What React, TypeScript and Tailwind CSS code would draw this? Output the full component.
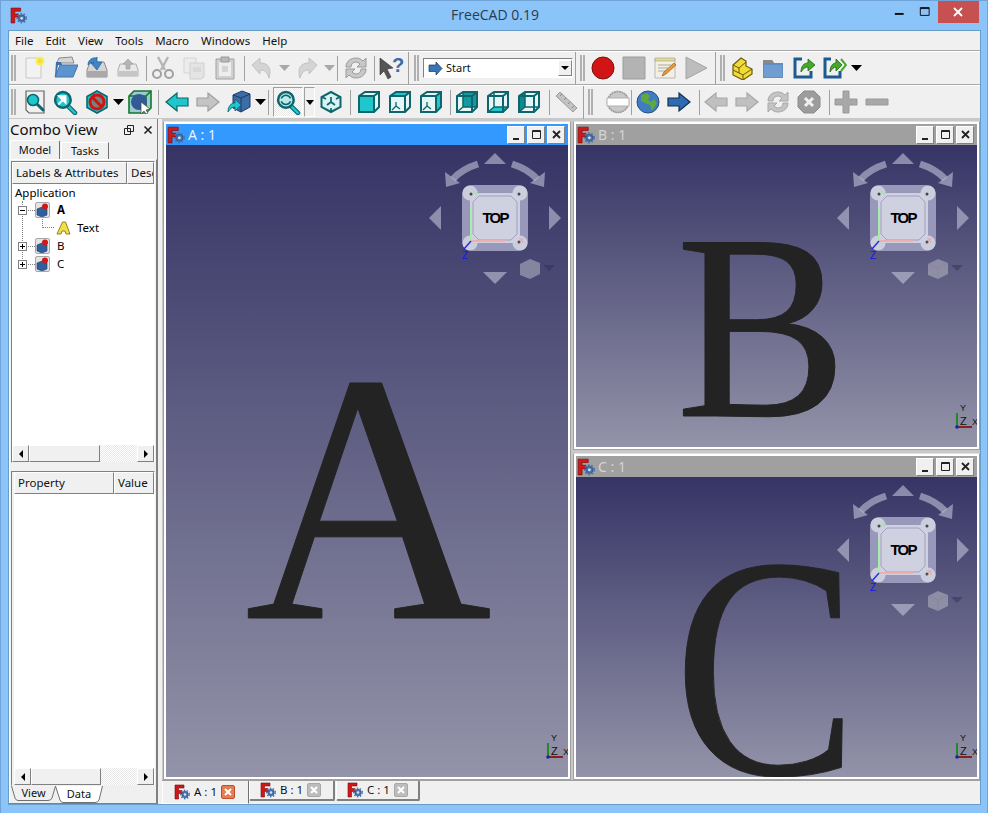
import type { ReactNode } from "react";

const bevel = "border border-t-white border-l-white border-b-[#808080] border-r-[#808080]";
const dither = "bg-[repeating-conic-gradient(#ffffff_0_25%,#e8e8e8_0_50%)] bg-[length:2px_2px]";

// ---------- icons ----------
function Ico({ children, size = 24 }: { children: ReactNode; size?: number }) {
  return (
    <svg width={size} height={size} viewBox="0 0 24 24">
      {children}
    </svg>
  );
}

function FcLogo({ size = 16 }: { size?: number }) {
  return (
    <svg width={size} height={size} viewBox="0 0 16 16" className="shrink-0">
      <path d="M1 1h9v3H4.500v2.500H8v3H4.500V15H1z" fill="#d01818" stroke="#7a0c0c" strokeWidth="0.6" />
      <circle cx="11" cy="10.500" r="3.200" fill="#4a74b0" stroke="#24456f" strokeWidth="0.6" />
      <circle cx="11" cy="10.500" r="4.200" fill="none" stroke="#4a74b0" strokeWidth="1.600" strokeDasharray="1.500 1.500" />
      <circle cx="11" cy="10.500" r="1.200" fill="#dfe6f0" />
    </svg>
  );
}

const teal = "#1fc6cc";
const tealDark = "#0c666c";

type Face = "iso" | "front" | "top" | "right" | "rear" | "left" | "bottom";

function Cube({ face }: { face: Face }) {
  if (face === "iso") {
    return (
      <Ico>
        <path d="M12 2l9.500 5v10L12 22l-9.500-5V7z" fill="#d9f2f2" stroke={tealDark} strokeWidth="2" />
        <path d="M3 7l4 2M21 7l-4 2M12 22v-4M12 12V7M12 12l-4 3M12 12l4 3" stroke={tealDark} strokeWidth="1.700" />
      </Ico>
    );
  }
  const wire = face === "rear" || face === "left" || face === "bottom";
  return (
    <Ico>
      <path d="M2 6l6-4h14v15l-5 5H2z" fill="#e6f6f6" />
      {face === "rear" && <path d="M8 2h14v15H8z" fill="#119aa1" />}
      {face === "left" && <path d="M2 6l6-4v15l-6 5z" fill="#0d8a90" />}
      {face === "bottom" && <path d="M8 17h14l-5 5H2z" fill={teal} />}
      {wire && <path d="M8 2v15h14M8 17l-6 5" fill="none" stroke={tealDark} strokeWidth="1.500" />}
      {!wire && <path d="M8 16l-4 4M8 16l4 3M8 16v-4" stroke={tealDark} strokeWidth="1.300" />}
      {face === "top" && <path d="M2 6l6-4h14l-5 4z" fill={teal} />}
      {face === "right" && <path d="M17 6l5-4v15l-5 5z" fill={teal} />}
      {face === "front" && <path d="M2 6h15v16H2z" fill={teal} />}
      <path d="M2 6l6-4h14v15l-5 5H2zM2 6h15v16M17 6l5-4" fill="none" stroke={tealDark} strokeWidth="2" />
    </Ico>
  );
}

function Magnifier({ children, fill = "#bdeaea" }: { children?: ReactNode; fill?: string }) {
  return (
    <Ico size={25}>
      <path d="M14 15l7 7" stroke="#0a6a70" strokeWidth="4.500" strokeLinecap="round" />
      <path d="M14 15l7 7" stroke={teal} strokeWidth="2.200" strokeLinecap="round" />
      <circle cx="9.500" cy="9.500" r="7.500" fill={fill} stroke={tealDark} strokeWidth="2.400" />
      {children}
    </Ico>
  );
}

const grayFill = "#c8c8c8";
const grayLine = "#9a9a9a";

function Arrow({ dir, fill, line }: { dir: "l" | "r"; fill: string; line: string }) {
  return (
    <Ico>
      <path
        d={dir === "l" ? "M1 12L12 3v5h11v8H12v5z" : "M23 12L12 3v5H1v8h11v5z"}
        fill={fill}
        stroke={line}
        strokeWidth="1.200"
      />
    </Ico>
  );
}

function Refresh({ fill, line }: { fill: string; line: string }) {
  const half = "M2 11C2 5 7 2 12 2c3 0 5 1 7 3l3-3v9h-9l3-3c-1-1-3-2-4-2-3 0-5 2-5 5z";
  return (
    <Ico>
      <path d={half} fill={fill} stroke={line} />
      <path d={half} fill={fill} stroke={line} transform="rotate(180 12 12)" />
    </Ico>
  );
}

const icons: Record<string, ReactNode> = {
  new: (
    <Ico>
      <path d="M3 2h15v20H3z" fill="#f2f2f2" stroke="#c8c8c8" />
      <circle cx="17" cy="5" r="4.500" fill="#f5ee60" />
      <circle cx="17" cy="5" r="2.200" fill="#f6d93a" />
    </Ico>
  ),
  open: (
    <Ico>
      <path d="M3 6l2-4 13-1 2 6H3z" fill="#d6d6d6" stroke="#8a8a8a" />
      <path d="M6 9h18l-5 12H1z" fill="#5b94cf" stroke="#4273a8" />
      <path d="M2 6h5l1 3H4L2 20H1z" fill="#396ea6" />
    </Ico>
  ),
  save: (
    <Ico>
      <path d="M2 14l3-8h14l3 8v7H2z" fill="#d4d4d4" stroke="#8a8a8a" />
      <path d="M2 15h20v6H2z" fill="#a9a9a9" />
      <path d="M3 9c0-5 4-8 9-7v-1 5h5l-5 8-6-7h3c-2-1-4 0-6 2z" fill="#3f84c8" stroke="#2a5f96" strokeWidth="0.7" />
    </Ico>
  ),
  saveas: (
    <Ico>
      <path d="M2 14l2-6h16l2 6v6H2z" fill="#e8e8e8" stroke="#b0b0b0" />
      <path d="M2 15h20v5H2z" fill="#c6c6c6" />
      <path d="M12 3l5 5h-3v5h-4V8H7z" fill="#b5b5b5" stroke="#999" strokeWidth="0.6" />
    </Ico>
  ),
  cut: (
    <Ico>
      <path d="M7 1l7 13M17 1l-7 13" stroke="#b5b5b5" strokeWidth="2.400" />
      <circle cx="6" cy="18" r="4" fill="none" stroke="#a0a0a0" strokeWidth="2" />
      <circle cx="18" cy="18" r="4" fill="none" stroke="#a0a0a0" strokeWidth="2" />
    </Ico>
  ),
  copy: (
    <Ico>
      <path d="M2 2h12v15H2z" fill="#ececec" stroke="#d4d4d4" />
      <path d="M8 7h14v14l-3 2H8z" fill="#e4e4e4" stroke="#cfcfcf" />
      <path d="M11 11h8v5h-8z" fill="#d8d8d8" />
    </Ico>
  ),
  paste: (
    <Ico>
      <path d="M3 3h18v20H3z" fill="#d0d0d0" stroke="#a2a2a2" />
      <path d="M6 6h12v14H6z" fill="#ededed" />
      <path d="M8 1h8v5H8z" fill="#b9b9b9" stroke="#999" />
      <path d="M9 10h6v6H9z" fill="#d4d4d4" />
    </Ico>
  ),
  undo: (
    <Ico>
      <path d="M1 9l8-7v5c8 0 12 5 9 15-2-6-4-8-9-8v4z" fill="#d4d4d4" stroke="#c0c0c0" />
    </Ico>
  ),
  redo: (
    <Ico>
      <path d="M23 9l-8-7v5C7 7 3 12 6 22c2-6 4-8 9-8v4z" fill="#d4d4d4" stroke="#c0c0c0" />
    </Ico>
  ),
  refresh: <Refresh fill={grayFill} line={grayLine} />,
  what: (
    <svg width="26" height="26" viewBox="0 0 26 26">
      <path d="M2 3l13 10-6 1 4 8-3 2-4-8-4 4z" fill="#555" stroke="#333" strokeWidth="0.6" />
      <text x="14" y="17" fontSize="20" fontWeight="700" fontFamily="Liberation Sans" fill="#3a6ea8">
        ?
      </text>
    </svg>
  ),
  record: (
    <svg width="26" height="26" viewBox="0 0 26 26">
      <circle cx="13" cy="13" r="11" fill="#d11414" stroke="#7d1010" />
    </svg>
  ),
  stop: (
    <Ico>
      <path d="M1 1h22v22H1z" fill="#b3b3b3" stroke="#9c9c9c" />
    </Ico>
  ),
  macroEdit: (
    <Ico>
      <path d="M2 3h20v19H2z" fill="#f3f0e2" stroke="#b8b8b8" />
      <path d="M2 2h20v3H2z" fill="#e0d9a0" stroke="#a8a070" strokeWidth="0.6" />
      <path d="M5 9h13M5 12h10M5 15h8" stroke="#a8a8a8" />
      <path d="M9 20l2-4L21 7l2 2-10 9z" fill="#e99a3c" stroke="#9a5c1e" strokeWidth="0.7" />
    </Ico>
  ),
  play: (
    <Ico>
      <path d="M2 1l21 11L2 23z" fill="#bdbdbd" stroke="#a6a6a6" />
    </Ico>
  ),
  part: (
    <Ico>
      <path d="M3 9l8-7 5 3v5l6 3v5l-9 6-10-5z" fill="#f2da3a" stroke="#6a5c08" strokeWidth="1.200" />
      <path d="M3 9l6 3 7-6M9 12v5l4 2 9-6M3 14l6 3M13 19v4" fill="none" stroke="#6a5c08" strokeWidth="1" />
    </Ico>
  ),
  folder: (
    <Ico>
      <path d="M2 4h9l2 3h9v15H2z" fill="#5f8dc4" />
      <path d="M2 4h9l2 3H2z" fill="#8a8a8a" />
      <path d="M3 9h18v12H3z" fill="#6f9dd2" />
    </Ico>
  ),
  exportA: (
    <Ico>
      <path d="M10 3H3v18h16v-6" fill="none" stroke="#1e5a92" strokeWidth="3" />
      <path d="M9 16c0-6 3-9 7-9V3l7 6-7 6v-4c-3 0-5 2-7 5z" fill="#47a82c" stroke="#1d6a10" strokeWidth="0.8" />
    </Ico>
  ),
  exportB: (
    <Ico>
      <path d="M8 3H2v18h15v-6" fill="none" stroke="#1e5a92" strokeWidth="3" />
      <path d="M7 16c0-6 3-9 6-9V3l6 6-6 6v-4c-2 0-4 2-6 5z" fill="#47a82c" stroke="#1d6a10" strokeWidth="0.8" />
      <path d="M18 3l5 6-5 6" fill="none" stroke="#47a82c" strokeWidth="2" />
    </Ico>
  ),
  fitAll: (
    <Ico>
      <path d="M3 1h18v22H6l-3-3z" fill="#f0f0f0" stroke="#666" strokeWidth="1.200" />
      <path d="M14 14l6 6" stroke={tealDark} strokeWidth="3" strokeLinecap="round" />
      <circle cx="10" cy="10" r="5.500" fill={teal} stroke={tealDark} strokeWidth="1.600" />
    </Ico>
  ),
  fitSel: (
    <Magnifier fill={teal}>
      <path d="M5 14l6-6M6 6h6v6z" fill="#fff" stroke="#fff" strokeWidth="2" />
    </Magnifier>
  ),
  noDraw: (
    <Ico>
      <path d="M12 1l10 5.500v11L12 23 2 17.500v-11z" fill={teal} stroke={tealDark} strokeWidth="1.600" />
      <circle cx="12" cy="12" r="7" fill="#7f7f7f" stroke="#cf1212" strokeWidth="3" />
      <path d="M7 7l10 10" stroke="#cf1212" strokeWidth="3" />
    </Ico>
  ),
  selBox: (
    <Ico>
      <path d="M6 1h17v17l-5 5H1V6z" fill="#9ec9cf" stroke="#0d7a2c" strokeWidth="1.600" />
      <path d="M1 6h17v17M18 6l5-5" fill="none" stroke="#0d7a2c" strokeWidth="1.600" />
      <circle cx="11" cy="12" r="8" fill="#315a96" />
      <path d="M13 12l9 7-4 1 2 3-2 1-2-3-3 3z" fill="#fff" stroke="#444" strokeWidth="0.7" />
    </Ico>
  ),
  tealLeft: <Arrow dir="l" fill={teal} line={tealDark} />,
  grayRight: <Arrow dir="r" fill="#c4c4c4" line="#a0a0a0" />,
  boxAction: (
    <Ico>
      <path d="M6 5l9-4 8 3v13l-9 5-8-4z" fill="#3d6da8" stroke="#1c3c66" />
      <path d="M6 5l8 3 9-4M14 8v14" fill="none" stroke="#1c3c66" />
      <path d="M1 22c0-6 3-9 7-9V9l6 6-6 6v-4c-3 0-5 2-7 5z" fill={teal} stroke={tealDark} strokeWidth="0.8" />
    </Ico>
  ),
  zoomSync: (
    <Magnifier>
      <path d="M5 8c2-4 7-4 9 0M14 11c-2 4-7 4-9 0" fill="none" stroke={tealDark} strokeWidth="1.500" />
    </Magnifier>
  ),
  iso: <Cube face="iso" />,
  front: <Cube face="front" />,
  top: <Cube face="top" />,
  right: <Cube face="right" />,
  rear: <Cube face="rear" />,
  bottom: <Cube face="bottom" />,
  left: <Cube face="left" />,
  ruler: (
    <Ico>
      <path d="M2 6l4-4 17 16-4 4z" fill="#c2c2c2" stroke="#9c9c9c" />
      <path d="M8 4l-2 2M12 8l-2 2M16 12l-2 2M20 16l-2 2" stroke="#8a8a8a" />
    </Ico>
  ),
  ring: (
    <Ico>
      <circle cx="12" cy="12" r="10.500" fill="#c8c8c8" stroke="#9a9a9a" strokeWidth="1.600" strokeDasharray="2 0.500" />
      <path d="M1 8h22v8H1z" fill="#fff" stroke="#b0b0b0" />
    </Ico>
  ),
  globe: (
    <Ico>
      <circle cx="12" cy="12" r="11" fill="#3f7cc4" stroke="#2a4f80" />
      <path d="M5 5l6-2 3 3-2 4 3 2 3-3 3 4-5 8-2-6-5-2-4-2z" fill="#5fa83c" />
    </Ico>
  ),
  blueRight: <Arrow dir="r" fill="#2e6bb0" line="#172f52" />,
  grayLeft2: <Arrow dir="l" fill="#c0c0c0" line="#a8a8a8" />,
  grayRight2: <Arrow dir="r" fill="#c0c0c0" line="#a8a8a8" />,
  refresh2: <Refresh fill="#c4c4c4" line="#a8a8a8" />,
  stopX: (
    <Ico>
      <path d="M7 1h10l6 6v10l-6 6H7l-6-6V7z" fill="#9c9c9c" stroke="#8c8c8c" />
      <path d="M8 8l8 8M16 8l-8 8" stroke="#f0f0f0" strokeWidth="3" />
    </Ico>
  ),
  plus: (
    <Ico>
      <path d="M9 1h6v8h8v6h-8v8H9v-8H1V9h8z" fill="#a8a8a8" stroke="#9a9a9a" />
    </Ico>
  ),
  minus: (
    <Ico>
      <path d="M1 9h22v6H1z" fill="#a8a8a8" stroke="#9a9a9a" />
    </Ico>
  ),
};

// ---------- toolbar bits ----------
function Btn({ name }: { name: string }) {
  return <div className="flex h-[30px] w-[31px] shrink-0 items-center justify-center">{icons[name]}</div>;
}

function Drop({ color = "black", w = "w-[14px]" }: { color?: string; w?: string }) {
  return (
    <div className={`flex h-[30px] shrink-0 items-center justify-center ${w}`}>
      <svg width="11" height="6" viewBox="0 0 11 6">
        <path d="M0 0h11L5.500 6z" fill={color} />
      </svg>
    </div>
  );
}

function Sep({ className = "" }: { className?: string }) {
  return <div className={`h-[25px] w-px shrink-0 bg-[#a0a0a0] ${className}`} />;
}

function Grip({ className = "" }: { className?: string }) {
  return (
    <div className={`flex h-[26px] shrink-0 gap-px ${className}`}>
      <div className="w-[2px] border-x border-x-[#b0b0b0] bg-white" />
      <div className="w-[2px] border-x border-x-[#b0b0b0] bg-white" />
    </div>
  );
}

function WinBtn({ kind }: { kind: "min" | "max" | "close" }) {
  return (
    <div className={`flex h-[18px] w-[18px] items-center justify-center bg-[#f0f0f0] ${bevel}`}>
      <svg width="11" height="11" viewBox="0 0 11 11">
        {kind === "min" && <path d="M2 9h6v2H2z" fill="#222" />}
        {kind === "max" && <path d="M1.500 1.500h8v8h-8zM1.500 2.500h8" fill="none" stroke="#222" />}
        {kind === "close" && <path d="M2 2l7 7M9 2l-7 7" stroke="#222" strokeWidth="1.800" />}
      </svg>
    </div>
  );
}

// ---------- navigation cube overlay ----------
function NaviCube({ className }: { className: string }) {
  const soft = "rgba(205,205,225,0.55)";
  return (
    <svg width="140" height="145" viewBox="-70 -73 140 145" className={`absolute ${className}`}>
      <path d="M0-65l11 11h-22z" fill={soft} />
      <path d="M0 66l-12-12h24z" fill={soft} />
      <path d="M-66 0l12-12v24z" fill={soft} />
      <path d="M66 0l-12-12v24z" fill={soft} />
      <path d="M-17-54Q-33-49-42-39" fill="none" stroke={soft} strokeWidth="7" />
      <path d="M-49-31l-1-15 15 11z" fill={soft} />
      <path d="M17-54Q33-49 42-39" fill="none" stroke={soft} strokeWidth="7" />
      <path d="M49-31l1-15-15 11z" fill={soft} />
      <path d="M-22-33h44q11 0 11 11v44q0 11-11 11h-44q-11 0-11-11v-44q0-11 11-11z" fill="#9899ba" />
      <circle cx="-25" cy="-25" r="7.500" fill="#cdcedd" />
      <circle cx="25" cy="-25" r="7.500" fill="#cdcedd" />
      <circle cx="-25" cy="25" r="7.500" fill="#cdcedd" />
      <circle cx="25" cy="25" r="7.500" fill="#cdcedd" />
      <path d="M-25-20l5-5h40l5 5v40l-5 5h-40l-5-5z" fill="#cfd0e0" />
      <path d="M-22-16l6-6h32l6 6v32l-6 6h-32l-6-6z" fill="none" stroke="#a0a1bf" strokeWidth="1" />
      <circle cx="-24" cy="-24" r="1.500" fill="#444" />
      <circle cx="24" cy="-24" r="1.500" fill="#444" />
      <circle cx="24" cy="24" r="1.500" fill="#444" />
      <path d="M-24 23v-34" stroke="#a6f0a6" strokeWidth="1.800" />
      <path d="M-24 23h34" stroke="#f0afaf" strokeWidth="1.800" />
      <path d="M-24 23l-7 8" stroke="#2222ee" strokeWidth="1.400" />
      <text x="-33" y="41" fontSize="10" fontFamily="Liberation Sans" fill="#1515e8">Z</text>
      <text x="-22" y="-22" fontSize="8" fontFamily="Liberation Sans" fill="#8cf08c">Y</text>
      <text x="24" y="25" fontSize="8" fontFamily="Liberation Sans" fill="#e89a9a">X</text>
      <text x="0" y="5" textAnchor="middle" fontSize="15" fontWeight="700" letterSpacing="-1.800" fontFamily="Liberation Sans" fill="#000">TOP</text>
      <path d="M25 46l10-5 10 4v11l-10 5-10-4z" fill="rgba(175,175,190,0.6)" />
      <path d="M25 46l10 4 10-5M35 50v11" fill="none" stroke="rgba(130,130,155,0.6)" />
      <path d="M48 47h12l-6 6z" fill="rgba(40,40,70,0.4)" />
    </svg>
  );
}

function MiniAxis() {
  return (
    <svg width="26" height="36" viewBox="0 0 26 36" className="absolute bottom-[11px] right-[-1px]">
      <path d="M5 27V13" stroke="#1f8a2c" strokeWidth="2" />
      <path d="M5 27h15" stroke="#8a2020" strokeWidth="2" />
      <circle cx="5" cy="27" r="1.800" fill="#2020a0" />
      <text x="8" y="11" fontSize="9" fontFamily="Liberation Sans" fill="#111">Y</text>
      <text x="8" y="25" fontSize="11" fontFamily="Liberation Sans" fill="#111">Z</text>
      <text x="20" y="25" fontSize="9" fontFamily="Liberation Sans" fill="#111">X</text>
    </svg>
  );
}

// ---------- 3D view sub window ----------
function SubWindow({
  title,
  active,
  className,
  cube,
  letter,
}: {
  title: string;
  active?: boolean;
  className: string;
  cube: string;
  letter: ReactNode;
}) {
  return (
    <div className={`flex flex-col border border-b-[#a0a0a0] border-l-[#a0a0a0] border-r-[#a0a0a0] border-t-[#e0e0e0] bg-white p-[2px] ${className}`}>
      <div className={`flex h-[21px] shrink-0 items-center gap-[3px] pl-px pr-[3px] ${active ? "bg-[#3399ff]" : "bg-[#a0a0a0]"}`}>
        <FcLogo size={18} />
        <span className={`text-[14px] ${active ? "text-[#e8f2ff]" : "text-[#d4d4d4]"}`}>{title}</span>
        <div className="ml-auto flex gap-[2px]">
          <WinBtn kind="min" />
          <WinBtn kind="max" />
          <WinBtn kind="close" />
        </div>
      </div>
      <div className="relative flex-1 overflow-hidden bg-[linear-gradient(#363465,#9393a9)]">
        {letter}
        <NaviCube className={`top-0 ${cube}`} />
        <MiniAxis />
      </div>
    </div>
  );
}

function BigLetter({ children, className }: { children: string; className: string }) {
  return (
    <span className={`absolute origin-left leading-none text-[#232323] [-webkit-text-stroke:1px_#232323] [font-family:'Liberation_Serif',serif] ${className}`}>
      {children}
    </span>
  );
}

// ---------- left dock ----------
function HScroll({ thumb }: { thumb: string }) {
  return (
    <div className={`flex h-[17px] shrink-0 ${dither}`}>
      <div className={`flex w-[17px] items-center justify-center bg-[#f0f0f0] ${bevel}`}>
        <svg width="6" height="8" viewBox="0 0 6 8"><path d="M5 0v8L1 4z" /></svg>
      </div>
      <div className={`bg-[#f0f0f0] ${bevel} ${thumb}`} />
      <div className={`ml-auto flex w-[17px] items-center justify-center bg-[#f0f0f0] ${bevel}`}>
        <svg width="6" height="8" viewBox="0 0 6 8"><path d="M1 0v8l4-4z" /></svg>
      </div>
    </div>
  );
}

function HeadCell({ children, className }: { children: string; className: string }) {
  return (
    <div className={`flex h-[22px] items-center overflow-hidden whitespace-nowrap bg-[#f0f0f0] pl-[3px] ${bevel} ${className}`}>
      {children}
    </div>
  );
}

function Expander({ open }: { open?: boolean }) {
  return (
    <div className="relative h-[9px] w-[9px] shrink-0 border border-[#808080] bg-white">
      <div className="absolute left-[1px] top-[3px] h-px w-[5px] bg-black" />
      {!open && <div className="absolute left-[3px] top-[1px] h-[5px] w-px bg-black" />}
    </div>
  );
}

function DocIcon() {
  return (
    <div className="flex h-[16px] w-[15px] items-center justify-center rounded-[2px] border border-[#a8a8a8] bg-[#e4e4e4]">
      <svg width="13" height="14" viewBox="0 0 13 14">
        <path d="M1 6l5-2 5 2v6l-5 2-5-2z" fill="#2f5f9c" stroke="#1d3d66" strokeWidth="0.6" />
        <circle cx="9" cy="3.500" r="3" fill="#d01818" />
      </svg>
    </div>
  );
}

function TreeRow({ label, open, bold }: { label: string; open?: boolean; bold?: boolean }) {
  return (
    <div className="flex h-[18px] items-center pl-[6px]">
      <Expander open={open} />
      <div className="ml-[1px] h-0 w-[7px] border-t border-dotted border-[#808080]" />
      <DocIcon />
      <span className={`ml-[7px] text-black ${bold ? "font-bold" : ""}`}>{label}</span>
    </div>
  );
}

function Tab({ title, className }: { title: string; className: string }) {
  return (
    <div className={`flex h-[20px] items-center gap-[4px] rounded-b-[2px] border-b-2 border-l border-r-2 border-b-[#808080] border-l-white border-r-[#808080] pl-[10px] ${className}`}>
      <FcLogo size={16} />
      <span>{title}</span>
      <div className="flex h-[14px] w-[14px] items-center justify-center rounded-[2px] border border-[#a8a8a8] bg-[#bdbdbd]">
        <svg width="8" height="8" viewBox="0 0 8 8"><path d="M1 1l6 6M7 1l-6 6" stroke="#fff" strokeWidth="2" /></svg>
      </div>
    </div>
  );
}

export default function App() {
  return (
    <div className="flex h-[813px] w-[988px] flex-col overflow-hidden border border-b-0 border-[#6fa3d6] bg-[#8bc4f8] text-[11.5px] text-[#111] [font-family:'Noto_Sans','Liberation_Sans',sans-serif]">
      {/* title bar */}
      <div className="flex h-[29px] shrink-0 items-start">
        <div className="w-[100px] pl-[9px] pt-[6px]">
          <FcLogo size={17} />
        </div>
        <div className="flex-1 pl-[2px] pt-[3px] text-center text-[14px] text-[#2b3a4d] [font-family:'Open_Sans',sans-serif]">FreeCAD 0.19</div>
        <div className="flex w-[100px] items-start justify-end pr-[8px]">
          <svg width="26" height="20" viewBox="0 0 26 20"><path d="M8 12h9v2H8z" fill="#111" /></svg>
          <svg width="26" height="20" viewBox="0 0 26 20"><path d="M8.500 6.500h9v8h-9zM8.500 7.500h9" fill="none" stroke="#111" /></svg>
          <div className="flex h-[22px] w-[42px] items-center justify-center bg-[#c75050]">
            <svg width="10" height="10" viewBox="0 0 10 10"><path d="M1 1l8 8M9 1l-8 8" stroke="#fff" strokeWidth="1.800" /></svg>
          </div>
        </div>
      </div>

      {/* client */}
      <div className="ml-[7px] mr-[6px] flex h-[775px] flex-col border border-[#6a9cc9] bg-[#f0f0f0]">
        {/* menu */}
        <div className="flex h-[20px] shrink-0 items-center gap-[12px] border-b border-b-[#a8a8a8] pl-[6px]">
          {["File", "Edit", "View", "Tools", "Macro", "Windows", "Help"].map((m) => (
            <span key={m}>{m}</span>
          ))}
        </div>

        {/* toolbar 1 */}
        <div className="flex h-[34px] shrink-0 items-center border-b border-t border-b-[#a8a8a8] border-t-white">
          <Grip className="ml-[2px] mr-[3px]" />
          <Btn name="new" />
          <Btn name="open" />
          <Btn name="save" />
          <Btn name="saveas" />
          <Sep className="ml-[3px]" />
          <Btn name="cut" />
          <Btn name="copy" />
          <Btn name="paste" />
          <Sep className="ml-[4px] mr-[2px]" />
          <Btn name="undo" />
          <Drop color="#a8a8a8" w="w-[12px]" />
          <Btn name="redo" />
          <Drop color="#a8a8a8" w="w-[16px]" />
          <Sep className="mr-[2px]" />
          <Btn name="refresh" />
          <Sep className="ml-[3px]" />
          <Btn name="what" />
          <Sep className="ml-[2px] !h-[33px]" />
          <Grip className="ml-[5px] mr-[4px]" />
          <div className="flex h-[20px] w-[150px] shrink-0 items-center border border-b-white border-l-[#808080] border-r-white border-t-[#808080] bg-white pl-[4px]">
            <svg width="15" height="13" viewBox="0 0 15 13" className="shrink-0">
              <path d="M1 3h7V0l6 6.500-6 6.500V9.500H1z" fill="#3a74b8" stroke="#1c3658" strokeWidth="0.7" />
            </svg>
            <span className="ml-[3px] text-[11px]">Start</span>
            <div className={`ml-auto flex h-[16px] w-[14px] items-center justify-center bg-[#f0f0f0] ${bevel}`}>
              <svg width="8" height="4" viewBox="0 0 8 4"><path d="M0 0h8L4 4z" /></svg>
            </div>
          </div>
          <Sep className="ml-[2px] !h-[33px]" />
          <Grip className="ml-[4px] mr-[2px]" />
          <Btn name="record" />
          <Btn name="stop" />
          <Btn name="macroEdit" />
          <Btn name="play" />
          <Sep className="ml-[4px] !h-[33px]" />
          <Grip className="ml-[4px] mr-[1px]" />
          <Btn name="part" />
          <Btn name="folder" />
          <Btn name="exportA" />
          <Btn name="exportB" />
          <Drop w="w-[12px]" />
        </div>

        {/* toolbar 2 */}
        <div className="flex h-[34px] shrink-0 items-center border-b border-t border-b-[#c8c8c8] border-t-white">
          <Grip className="ml-[2px] mr-[3px]" />
          <Btn name="fitAll" />
          <Btn name="fitSel" />
          <Btn name="noDraw" />
          <Drop w="w-[12px]" />
          <Btn name="selBox" />
          <Sep className="ml-[3px] mr-[2px]" />
          <Btn name="tealLeft" />
          <Btn name="grayRight" />
          <Btn name="boxAction" />
          <Drop w="w-[12px]" />
          <Sep className="ml-[2px]" />
          <div className={`ml-[4px] flex h-[30px] w-[30px] shrink-0 items-center justify-center border border-b-white border-l-[#a0a0a0] border-r-white border-t-[#a0a0a0] ${dither}`}>
            {icons.zoomSync}
          </div>
          <div className="ml-px flex h-[30px] w-[11px] shrink-0 items-center justify-center border border-b-white border-l-[#a0a0a0] border-r-white border-t-[#a0a0a0] bg-[#f0f0f0]">
            <svg width="8" height="5" viewBox="0 0 8 5"><path d="M0 0h8L4 5z" /></svg>
          </div>
          <Btn name="iso" />
          <Sep className="ml-[4px] mr-[2px]" />
          <Btn name="front" />
          <Btn name="top" />
          <Btn name="right" />
          <Sep className="ml-[4px]" />
          <Btn name="rear" />
          <Btn name="bottom" />
          <Btn name="left" />
          <Sep className="ml-[5px]" />
          <Btn name="ruler" />
          <Sep className="ml-[2px] !h-[33px]" />
          <Grip className="ml-[4px] mr-[9px]" />
          <Btn name="ring" />
          <Sep className="-ml-[2px]" />
          <Btn name="globe" />
          <Btn name="blueRight" />
          <Sep className="ml-[5px]" />
          <Btn name="grayLeft2" />
          <Btn name="grayRight2" />
          <Btn name="refresh2" />
          <Btn name="stopX" />
          <Sep className="ml-[5px]" />
          <Btn name="plus" />
          <Btn name="minus" />
        </div>

        {/* main */}
        <div className="flex min-h-0 flex-1">
          {/* combo view dock */}
          <div className="flex w-[149px] shrink-0 flex-col border-b border-r border-b-[#808080] border-r-[#808080]">
            <div className="flex h-[21px] shrink-0 items-center pl-px text-[15px] leading-none">
              <span>Combo View</span>
              <svg width="10" height="10" viewBox="0 0 10 10" className="ml-auto">
                <path d="M3.500.5h6v6h-6zM.5 3.500h6v6h-6z" fill="#f0f0f0" stroke="#222" />
              </svg>
              <svg width="10" height="10" viewBox="0 0 10 10" className="ml-[9px] mr-[4px]">
                <path d="M1.500 1.500l7 7M8.500 1.500l-7 7" stroke="#222" strokeWidth="1.600" />
              </svg>
            </div>

            <div className="flex h-[19px] shrink-0 items-end pl-px text-[11px]">
              <div className="flex h-[19px] w-[50px] items-center justify-center rounded-t-[2px] border border-b-0 border-l-white border-r-[#707070] border-t-white">Model</div>
              <div className="ml-px flex h-[17px] w-[48px] items-center justify-center border border-b-0 border-l-white border-r-[#707070] border-t-white">Tasks</div>
            </div>

            <div className="flex min-h-0 flex-1 flex-col border-l border-r border-t border-l-white border-r-[#808080] border-t-white px-px pt-px">
              {/* tree */}
              <div className="flex h-[302px] shrink-0 flex-col border border-b-[#f0f0f0] border-l-[#808080] border-r-white border-t-[#808080]">
                <div className="flex shrink-0 overflow-hidden">
                  <HeadCell className="w-[115px] shrink-0">Labels &amp; Attributes</HeadCell>
                  <HeadCell className="flex-1">Description</HeadCell>
                </div>
                <div className="relative min-h-0 flex-1 bg-white text-black">
                  <div className="flex h-[17px] items-center pl-[3px]">Application</div>
                  <div className="absolute left-[10px] top-[17px] h-[60px] border-l border-dotted border-[#808080]" />
                  <TreeRow label="A" open bold />
                  <div className="relative flex h-[18px] items-center pl-[44px]">
                    <div className="absolute left-[30px] top-0 h-[9px] w-[12px] border-b border-l border-dotted border-[#808080]" />
                    <svg width="15" height="14" viewBox="0 0 15 14">
                      <path d="M1 13h4l1-3h3l1 3h4L9.500 1h-3z" fill="#f1e04a" stroke="#8a7410" strokeWidth="0.9" />
                    </svg>
                    <span className="ml-[6px]">Text</span>
                  </div>
                  <TreeRow label="B" />
                  <TreeRow label="C" />
                </div>
                <HScroll thumb="w-[71px]" />
              </div>

              {/* properties */}
              <div className="mt-[8px] flex min-h-0 flex-1 flex-col border border-b-[#f0f0f0] border-l-[#808080] border-r-white border-t-[#808080] pl-[2px]">
                <div className="flex shrink-0">
                  <HeadCell className="w-[100px] shrink-0">Property</HeadCell>
                  <HeadCell className="flex-1">Value</HeadCell>
                </div>
                <div className="min-h-0 flex-1 bg-white" />
                <HScroll thumb="w-[70px]" />
              </div>

              {/* view / data tabs */}
              <div className="flex h-[17px] shrink-0 items-start text-[11px]">
                <div className="relative flex h-[15px] w-[45px] items-center justify-center">
                  <svg width="45" height="15" viewBox="0 0 45 15" className="absolute inset-0">
                    <path d="M.5 0L4 12q1 2.500 3 2.500h30q3 0 4-2.500L44.500 0" fill="#f0f0f0" stroke="#707070" />
                  </svg>
                  <span className="relative">View</span>
                </div>
                <div className="relative -ml-[1px] flex h-[17px] w-[48px] items-center justify-center">
                  <svg width="48" height="17" viewBox="0 0 48 17" className="absolute inset-0">
                    <path d="M.5 0L5 14q1 2.500 3 2.500h32q3 0 4-2.500L47.500 0" fill="#fff" stroke="#707070" />
                  </svg>
                  <span className="relative">Data</span>
                </div>
              </div>
            </div>
          </div>

          {/* mdi area */}
          <div className="ml-[4px] flex min-w-0 flex-1 flex-col">
            <div className="grid min-h-0 flex-1 grid-cols-[408px_1fr] grid-rows-[329px_1fr] gap-x-[2px] gap-y-[3px] bg-[#c8c8c8] pl-[1px] pt-[2px]">
              <SubWindow
                title="A : 1"
                active
                className="row-span-2"
                cube="right-[3px]"
                letter={<BigLetter className="left-[79px] top-[175px] scale-x-[0.96] text-[356px]">A</BigLetter>}
              />
              <SubWindow
                title="B : 1"
                className=""
                cube="right-[4px]"
                letter={<BigLetter className="left-[100px] top-[49px] scale-x-[0.97] text-[265px]">B</BigLetter>}
              />
              <SubWindow
                title="C : 1"
                className=""
                cube="right-[4px]"
                letter={<BigLetter className="left-[98px] top-[32px] scale-x-[0.87] text-[316px]">C</BigLetter>}
              />
            </div>
            {/* document tabs */}
            <div className="flex h-[24px] shrink-0 items-start border-t border-t-[#a0a0a0] bg-[#f0f0f0]">
              <div className="flex h-[23px] w-[87px] items-center gap-[4px] border-b border-l border-r border-b-white border-l-white border-r-[#707070] pl-[11px]">
                <FcLogo size={16} />
                <span>A : 1</span>
                <div className="flex h-[14px] w-[14px] items-center justify-center rounded-[2px] border border-[#c05030] bg-[#e67a50]">
                  <svg width="8" height="8" viewBox="0 0 8 8"><path d="M1 1l6 6M7 1l-6 6" stroke="#fff" strokeWidth="2" /></svg>
                </div>
              </div>
              <Tab title="B : 1" className="w-[86px]" />
              <Tab title="C : 1" className="ml-px w-[84px]" />
            </div>
          </div>
        </div>
      </div>
    </div>
  );
}
